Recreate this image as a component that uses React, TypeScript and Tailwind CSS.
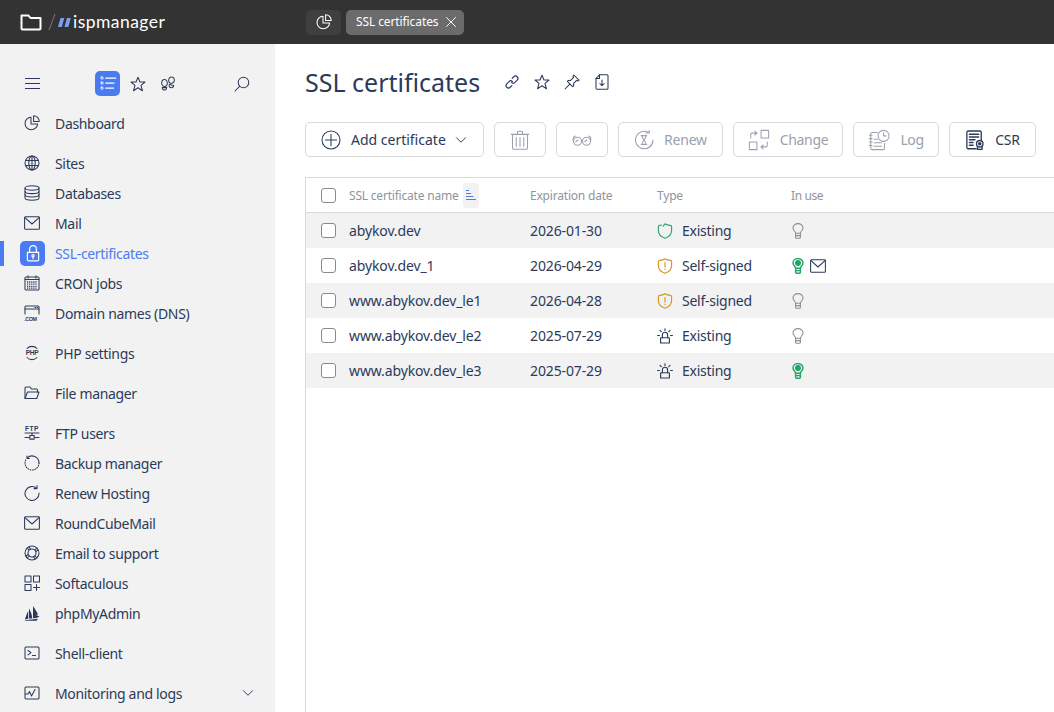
import React from "react";
import { ChevronDown, X } from "lucide-react";

type IconProps = { size?: number; className?: string; children?: React.ReactNode };

const Ic = ({ size = 16, className = "", children }: IconProps) => (
  <svg
    width={size}
    height={size}
    viewBox="0 0 16 16"
    fill="none"
    stroke="currentColor"
    strokeWidth="1.05"
    strokeLinecap="round"
    strokeLinejoin="round"
    className={`shrink-0 ${className}`}
  >
    {children}
  </svg>
);

// sidebar + header icons
const PieIcon = (p: IconProps) => (
  <Ic {...p}>
    <path d="M7 2.2A6.3 6.3 0 1 0 13.6 9H7Z" />
    <path d="M9.6 .8V6.4H15.2A5.6 5.6 0 0 0 9.6 .8Z" />
  </Ic>
);
const GlobeIcon = () => (
  <Ic>
    <circle cx="8" cy="8" r="7" />
    <ellipse cx="8" cy="8" rx="3.2" ry="7" />
    <path d="M8 1V15M1.5 5.5H14.5M1.5 10.5H14.5" />
  </Ic>
);
const DbIcon = () => (
  <Ic>
    <ellipse cx="8" cy="3" rx="7" ry="2.2" />
    <path d="M1 3V13C1 14.2 4 15.2 8 15.2S15 14.2 15 13V3" />
    <path d="M1 6.4C1 7.6 4 8.6 8 8.6S15 7.6 15 6.4M1 9.8C1 11 4 12 8 12S15 11 15 9.8" />
  </Ic>
);
const MailIcon = () => (
  <Ic>
    <rect x=".6" y="1.8" width="14.8" height="12.4" rx=".8" />
    <path d="M1 2.6L8 9L15 2.6" />
  </Ic>
);
const LockIcon = () => (
  <Ic size={18} className="text-white">
    <path d="M3 7.5H13V14A1 1 0 0 1 12 15H4A1 1 0 0 1 3 14Z" />
    <path d="M5 7.5V4.5A3 3 0 0 1 11 4.5V7.5" />
    <circle cx="8" cy="10.5" r="1" />
    <path d="M8 11.5V13" />
  </Ic>
);
const CalIcon = () => (
  <Ic>
    <rect x="1" y="2" width="14" height="13" rx="1" />
    <path d="M4 .8V3M12 .8V3M1 4.5H15" />
    <path
      d="M3 7H13M3 9.2H13M3 11.4H13M3 13.2H13"
      strokeDasharray="1.2 .9"
      strokeLinecap="butt"
      strokeWidth="1.3"
    />
  </Ic>
);
const DnsIcon = () => (
  <Ic>
    <path d="M1 9V2A1 1 0 0 1 2 1H14A1 1 0 0 1 15 2V9" />
    <path d="M1 4H15M11 2.5H11.6M13 2.5H13.6" />
    <text x="0" y="15.5" fontSize="5.4" fontWeight="700" fill="currentColor" stroke="none" fontFamily="Liberation Sans, sans-serif">
      .COM
    </text>
  </Ic>
);
const PhpIcon = () => (
  <Ic>
    <path d="M3 3.5A7 7 0 0 1 13 3.5M3 12.5A7 7 0 0 0 13 12.5" />
    <text x="8" y="10.4" textAnchor="middle" fontSize="6.6" fontWeight="700" fill="currentColor" stroke="none" fontFamily="Liberation Sans, sans-serif">
      PHP
    </text>
  </Ic>
);
const FolderOpenIcon = () => (
  <Ic>
    <path d="M1 13.5V3A1 1 0 0 1 2 2H6L7.5 4H12.5A1 1 0 0 1 13.5 5V7" />
    <path d="M1 13.5L3.5 7H15L12.8 13.5Z" />
  </Ic>
);
const FtpIcon = () => (
  <Ic>
    <text x="8" y="6" textAnchor="middle" fontSize="6.6" fontWeight="700" letterSpacing=".5" fill="currentColor" stroke="none" fontFamily="Liberation Sans, sans-serif">
      FTP
    </text>
    <path d="M1 8H15M8 8V10.5M1 12.5H5.5M10.5 12.5H15" />
    <rect x="5.8" y="10.5" width="4.4" height="3.6" />
  </Ic>
);
const BackupIcon = () => (
  <Ic>
    <path d="M3.2 2.9A7 7 0 0 1 15 8" />
    <path d="M3 1V3.4H5.4" />
    <path d="M15 8A7 7 0 1 1 1 8 7 7 0 0 1 2 4.4" strokeDasharray=".9 1.5" />
  </Ic>
);
const RenewIcon = () => (
  <Ic>
    <path d="M12.6 3.2A7 7 0 1 0 15 8" />
    <path d="M13 .6V3.6H10" />
  </Ic>
);
const BuoyIcon = () => (
  <Ic>
    <circle cx="8" cy="8" r="7" />
    <circle cx="8" cy="8" r="4" />
    <path d="M3 3L5.2 5.2M13 3L10.8 5.2M3 13L5.2 10.8M13 13L10.8 10.8M5 2L6.6 4.2M11 14L9.4 11.8M2 11L4.2 9.4M14 5L11.8 6.6" />
  </Ic>
);
const AppsIcon = () => (
  <Ic>
    <rect x="1" y="1" width="6" height="6" />
    <rect x="9.5" y="1" width="6" height="6" />
    <rect x="1" y="9.5" width="6" height="6" />
    <path d="M12.5 9.5V15.5M9.5 12.5H15.5" />
  </Ic>
);
const BoatIcon = () => (
  <Ic>
    <path
      d="M.8 14.5L3.2 8L4.2 6V13.8ZM5 13.6V3.5C6.5 6 8 9 8.2 13.4ZM9 13.3V1C11 4 13 7 14 9.5L12 10L15.5 11.5L12.3 13ZM.5 15.3L14 13.8L12.5 15.8H2Z"
      fill="currentColor"
      stroke="none"
    />
  </Ic>
);
const ShellIcon = () => (
  <Ic>
    <rect x="1" y="2" width="14" height="12" rx="1" />
    <path d="M4 5.5L7 7.7L4 9.9M8.5 10.5H11.5" />
  </Ic>
);
const MonitorIcon = () => (
  <Ic>
    <rect x="1" y="2" width="14" height="12" rx="1" />
    <path d="M1.5 9H4L5.5 6.5L7.5 11L11 4.5" />
  </Ic>
);
const StarIcon = () => (
  <Ic>
    <path d="M8 1.2L10 6H15L11 9.4L12.5 14.8L8 11.8L3.5 14.8L5 9.4L1 6H6Z" />
  </Ic>
);
const StepsIcon = () => (
  <Ic>
    <ellipse cx="4.5" cy="7" rx="2.8" ry="3.5" />
    <path d="M2.3 12.5A2.2 2.2 0 0 0 6.5 12.5" />
    <path d="M2.2 11.6H6.8" />
    <ellipse cx="11.5" cy="4.2" rx="2.8" ry="3.2" />
    <path d="M9.2 9.5A2.2 2.2 0 0 0 13.6 9.5L9.2 8.4" />
  </Ic>
);
const SearchIcon = () => (
  <Ic>
    <circle cx="9.5" cy="6.5" r="5.3" />
    <path d="M5.6 10.4L1 15" />
  </Ic>
);
const ListIcon = () => (
  <Ic size={18} className="text-white">
    <rect x="1.8" y="1.8" width="1.8" height="1.8" rx=".3" strokeWidth=".8" />
    <rect x="1.8" y="6.3" width="1.8" height="1.8" rx=".3" strokeWidth=".8" />
    <rect x="1.8" y="10.8" width="1.8" height="1.8" rx=".3" strokeWidth=".8" />
    <path d="M6 2.7H15M6 7.2H13.5M6 11.7H13" />
  </Ic>
);

// title icons
const LinkIcon = () => (
  <Ic>
    <g transform="rotate(-45 8 8)">
      <path d="M8.6 8A2.4 2.4 0 0 0 6.2 5.6H3A2.4 2.4 0 0 0 3 10.4H5.4" strokeWidth="1.15" />
      <path d="M7.4 8A2.4 2.4 0 0 0 9.8 10.4H13A2.4 2.4 0 0 0 13 5.6H10.6" strokeWidth="1.15" />
    </g>
  </Ic>
);
const PinIcon = () => (
  <Ic>
    <path d="M9.8 1L15 6.2L13.8 7L12.6 6.4L9.6 9.4L9.6 12L8.6 12.6L3.4 7.4L4 6.4H6.6L9.6 3.4L9 2.2Z" />
    <path d="M5.8 10.2L1 15" />
  </Ic>
);
const FileDownIcon = () => (
  <Ic>
    <path d="M5.5 .8H13A1 1 0 0 1 14 1.8V14.2A1 1 0 0 1 13 15.2H3A1 1 0 0 1 2 14.2V4.5Z" />
    <path d="M5.5 .8V4.5H2M8 6V11.5M5.8 9.5L8 11.7L10.2 9.5" />
  </Ic>
);

// toolbar icons
const PlusCircleIcon = () => (
  <Ic size={20}>
    <circle cx="8" cy="8" r="7.2" strokeWidth=".85" />
    <path d="M8 3.5V12.5M3.5 8H12.5" strokeWidth=".85" />
  </Ic>
);
const TrashIcon = () => (
  <Ic size={20}>
    <path d="M1 3.5H15M6 3.2V1.6A.6.6 0 0 1 6.6 1H9.4A.6.6 0 0 1 10 1.6V3.2" strokeWidth=".85" />
    <path d="M2 3.5V14.4A1 1 0 0 0 3 15.4H13A1 1 0 0 0 14 14.4V3.5" strokeWidth=".85" />
    <path d="M5 6V13M8 6V13M11 6V13" strokeWidth=".85" />
  </Ic>
);
const GlassesIcon = () => (
  <Ic size={20}>
    <circle cx="4.4" cy="9" r="3.2" strokeWidth=".85" />
    <circle cx="11.6" cy="9" r="3.2" strokeWidth=".85" />
    <path
      d="M7.6 8.5H8.4M1.2 9C.6 7 1 5.4 2.6 4.8M14.8 9C15.4 7 15 5.4 13.4 4.8M3 9.4L4.6 8M10.2 9.4L11.8 8"
      strokeWidth=".85"
    />
  </Ic>
);
const HourglassRenewIcon = () => (
  <Ic size={20}>
    <path d="M11.8 2A7 7 0 1 0 15.2 8" strokeWidth=".85" />
    <path d="M9.4 2.6H12.2V.2" strokeWidth=".85" transform="translate(0 -.2)" />
    <path d="M5.8 4.5H10.2M5.8 11.5H10.2M6.4 4.5C6.4 7 9.6 9 9.6 11.5M9.6 4.5C9.6 7 6.4 9 6.4 11.5" strokeWidth=".85" />
  </Ic>
);
const SwapIcon = () => (
  <Ic size={22}>
    <rect x="9.5" y="1" width="5.5" height="5.5" strokeWidth=".75" />
    <rect x="1" y="9.5" width="5.5" height="5.5" strokeWidth=".75" />
    <path d="M2 6.5V4A1 1 0 0 1 3 3H6.5M5 1.5L6.6 3L5 4.5" strokeWidth=".75" />
    <path d="M14 9.5V12A1 1 0 0 1 13 13H9.5M11 11.5L9.4 13L11 14.5" strokeWidth=".75" />
  </Ic>
);
const LogIcon = () => (
  <Ic size={22}>
    <path d="M7 2.5H3A1 1 0 0 0 2 3.5V14A1 1 0 0 0 3 15H11A1 1 0 0 0 12 14V10.5" strokeWidth=".75" />
    <path d="M1 4.5H3M1 7H3M1 9.5H3M1 12H3M4.5 7.5H7M4.5 10H10M4.5 12.5H10" strokeWidth=".75" />
    <circle cx="11.3" cy="5" r="4" strokeWidth=".75" />
    <path d="M11.3 2.8V5H13" strokeWidth=".75" />
  </Ic>
);
const CsrIcon = () => (
  <Ic size={20}>
    <path d="M9 15H2.5A1 1 0 0 1 1.5 14V1.8A1 1 0 0 1 2.5 .8H12A1 1 0 0 1 13 1.8V8" />
    <path d="M3.5 3.4H11M3.5 5.6H11M3.5 7.8H8M3.5 10H6.5M3.5 12.2H6.5" />
    <circle cx="11.8" cy="11" r="2.6" />
    <circle cx="11.8" cy="11" r=".9" fill="currentColor" />
    <path d="M10 13V15.6H13.6V13" />
  </Ic>
);

// table icons
const ShieldIcon = ({ className }: { className: string }) => (
  <Ic className={className}>
    <path d="M8 .8C9.6 2 10.8 2.4 13.2 2.4C14.2 2.4 14.6 3 14.6 4V7.6C14.6 11.2 11.8 14 8 15.2C4.2 14 1.4 11.2 1.4 7.6V4C1.4 3 1.8 2.4 2.8 2.4C5.2 2.4 6.4 2 8 .8Z" strokeWidth="1.15" />
    <path d="M8 4.5V9M8 11V11.4" strokeWidth="1.15" />
  </Ic>
);
const ShieldOkIcon = () => (
  <Ic className="text-[#2ba56f]">
    <path d="M4.4 2C3.8 2.3 3.3 2.4 2.8 2.4C1.8 2.4 1.4 3 1.4 4V7.6C1.4 11.2 4.2 14 8 15.2C11.8 14 14.6 11.2 14.6 7.6V4C14.6 3 14.2 2.4 13.2 2.4C10.8 2.4 9.6 2 8 .8L6.2 3.2" strokeWidth="1.15" />
  </Ic>
);
const AlarmIcon = () => (
  <Ic>
    <path d="M3.6 15V10.3A.6.6 0 0 1 4.2 9.7H11.8A.6.6 0 0 1 12.4 10.3V15Z" strokeWidth="1.15" />
    <path d="M5.4 9.7V6.8A2.6 2.6 0 0 1 10.6 6.8V9.7" strokeWidth="1.15" />
    <path d="M8 .8V2.4M3 2.4L4.2 3.6M13 2.4L11.8 3.6M.6 7.5H2.4M13.6 7.5H15.4" strokeWidth="1.15" />
  </Ic>
);
const BulbIcon = ({ on = false }: { on?: boolean }) => (
  <Ic className={on ? "text-[#1fa565]" : "text-[#8f8f8f]"}>
    <path d="M5.6 10.2C5.6 8.4 3 7.4 3 5A5 4.4 0 0 1 13 5C13 7.4 10.4 8.4 10.4 10.2Z" strokeWidth={on ? 1.4 : 1.1} />
    <path d="M5.6 10.2V14.2A1 1 0 0 0 6.6 15.2H9.4A1 1 0 0 0 10.4 14.2V10.2M5.6 12.6H10.4" strokeWidth={on ? 1.4 : 1.1} />
    {on && <circle cx="8" cy="5" r="2.4" fill="currentColor" />}
  </Ic>
);

type NavItem = { label: string; icon: React.ReactNode; active?: boolean; chevron?: boolean };

const navGroups: NavItem[][] = [
  [{ label: "Dashboard", icon: <PieIcon /> }],
  [
    { label: "Sites", icon: <GlobeIcon /> },
    { label: "Databases", icon: <DbIcon /> },
    { label: "Mail", icon: <MailIcon /> },
    { label: "SSL-certificates", icon: <LockIcon />, active: true },
    { label: "CRON jobs", icon: <CalIcon /> },
    { label: "Domain names (DNS)", icon: <DnsIcon /> },
  ],
  [{ label: "PHP settings", icon: <PhpIcon /> }],
  [{ label: "File manager", icon: <FolderOpenIcon /> }],
  [
    { label: "FTP users", icon: <FtpIcon /> },
    { label: "Backup manager", icon: <BackupIcon /> },
    { label: "Renew Hosting", icon: <RenewIcon /> },
    { label: "RoundCubeMail", icon: <MailIcon /> },
    { label: "Email to support", icon: <BuoyIcon /> },
    { label: "Softaculous", icon: <AppsIcon /> },
    { label: "phpMyAdmin", icon: <BoatIcon /> },
  ],
  [{ label: "Shell-client", icon: <ShellIcon /> }],
  [{ label: "Monitoring and logs", icon: <MonitorIcon />, chevron: true }],
];

const rows = [
  { name: "abykov.dev", date: "2026-01-30", type: "Existing", status: "ok", on: false, mail: false },
  { name: "abykov.dev_1", date: "2026-04-29", type: "Self-signed", status: "warn", on: true, mail: true },
  { name: "www.abykov.dev_le1", date: "2026-04-28", type: "Self-signed", status: "warn", on: false, mail: false },
  { name: "www.abykov.dev_le2", date: "2025-07-29", type: "Existing", status: "alarm", on: false, mail: false },
  { name: "www.abykov.dev_le3", date: "2025-07-29", type: "Existing", status: "alarm", on: true, mail: false },
];

const Checkbox = () => <span className="block size-[15px] rounded-[3px] border border-[#8a8a8a] bg-white" />;

const ToolButton = ({
  children,
  disabled = false,
  className = "",
}: {
  children: React.ReactNode;
  disabled?: boolean;
  className?: string;
}) => (
  <button
    className={`flex h-[35px] items-center justify-center rounded-[5px] border border-[#d9d9d9] bg-white text-[14px] ${
      disabled ? "text-[#9ba1ad]" : "text-[#2c3a5a]"
    } ${className}`}
  >
    {children}
  </button>
);

const App = () => {
  return (
    <div className="flex h-[712px] flex-col overflow-hidden bg-white font-['Noto_Sans',sans-serif] text-[14px] text-[#2c3a5a]">
      {/* header */}
      <div className="flex h-11 shrink-0 items-center bg-[#333333] pl-5">
        <svg width="22" height="18" viewBox="0 0 22 18" fill="none" stroke="white" strokeWidth="2" strokeLinejoin="round" className="shrink-0">
          <path d="M1.5 15.5V2.5H8.5L10.5 5H20.5V15.5A1 1 0 0 1 19.5 16.5H2.5A1 1 0 0 1 1.5 15.5Z" />
        </svg>
        <svg width="8" height="18" viewBox="0 0 8 18" className="ml-[6px] shrink-0" stroke="#777777" fill="none">
          <path d="M7 1L1 17" />
        </svg>
        <svg width="14" height="9" viewBox="0 0 14 9" fill="#7c9ff5" className="ml-[2px] shrink-0">
          <path d="M2.5 0H6.3L3.8 9H0ZM9 0H12.8L10.3 9H6.5Z" />
        </svg>
        <span className="ml-[1px] w-[93px] font-['Lato',sans-serif] text-[17.5px] font-normal tracking-[0.45px] text-white">ispmanager</span>
        <div className="ml-[140px] flex h-[25px] w-[35px] items-center justify-center rounded-[5px] bg-[#3f3f3f] text-white">
          <PieIcon />
        </div>
        <div className="ml-[5px] flex h-[25px] w-[118px] items-center rounded-[5px] bg-[#6b6b6b] pl-[10px] text-[12px] tracking-[-0.1px] text-white">
          <span>SSL certificates</span>
          <X size={18} strokeWidth={1.3} className="ml-auto mr-1" />
        </div>
      </div>

      <div className="flex min-h-0 flex-1">
        {/* sidebar */}
        <aside className="w-[275px] shrink-0 bg-[#f2f2f2] pt-[27px]">
          <div className="flex h-[25px] items-center pl-[25px] pr-[25px]">
            <svg width="15" height="13" viewBox="0 0 15 13" stroke="currentColor" fill="none" className="shrink-0">
              <path d="M0 1.5H15M0 6.5H15M0 11.5H15" />
            </svg>
            <div className="ml-[55px] flex size-[25px] items-center justify-center rounded-[5px] bg-[#4a7bf0]">
              <ListIcon />
            </div>
            <div className="ml-[10px]">
              <StarIcon />
            </div>
            <div className="ml-[14px]">
              <StepsIcon />
            </div>
            <div className="ml-auto">
              <SearchIcon />
            </div>
          </div>
          <nav className="mt-3 flex flex-col gap-[10px] tracking-[-0.33px]">
            {navGroups.map((group, i) => (
              <div key={i}>
                {group.map((item) => (
                  <div key={item.label} className="relative flex h-[30px] items-center pr-[18px]">
                    {item.active && <span className="absolute left-0 top-[2.5px] h-[25px] w-1 bg-[#4a7bf0]" />}
                    <div className={`flex w-[55px] shrink-0 items-center ${item.active ? "pl-5" : "pl-6"}`}>
                      {item.active ? (
                        <div className="flex size-[25px] items-center justify-center rounded-[5px] bg-[#4a7bf0]">{item.icon}</div>
                      ) : (
                        item.icon
                      )}
                    </div>
                    <span className={item.active ? "text-[#4a7bf0]" : ""}>{item.label}</span>
                    {item.chevron && <ChevronDown size={18} strokeWidth={1.3} className="ml-auto" />}
                  </div>
                ))}
              </div>
            ))}
          </nav>
        </aside>

        {/* content */}
        <main className="flex min-w-0 flex-1 flex-col pl-[30px]">
          <div className="mt-5 flex h-[36px] items-center">
            <h1 className="text-[25px] font-normal leading-none">SSL certificates</h1>
            <div className="ml-6 flex items-center gap-[14px]">
              <LinkIcon />
              <StarIcon />
              <PinIcon />
              <FileDownIcon />
            </div>
          </div>

          <div className="mt-[22px] flex gap-[10px]">
            <ToolButton className="w-[179px] justify-start gap-[10px] pl-[15px]">
              <PlusCircleIcon />
              <span>Add certificate</span>
              <ChevronDown size={18} strokeWidth={1.3} className="-ml-1" />
            </ToolButton>
            <ToolButton disabled className="w-[52px]">
              <TrashIcon />
            </ToolButton>
            <ToolButton disabled className="w-[52px]">
              <GlassesIcon />
            </ToolButton>
            <ToolButton disabled className="w-[105px] gap-[10px]">
              <HourglassRenewIcon />
              <span className="tracking-[-0.2px]">Renew</span>
            </ToolButton>
            <ToolButton disabled className="w-[110px] gap-[10px]">
              <SwapIcon />
              <span className="tracking-[-0.35px]">Change</span>
            </ToolButton>
            <ToolButton disabled className="w-[86px] gap-[10px]">
              <LogIcon />
              <span className="tracking-[-0.4px]">Log</span>
            </ToolButton>
            <ToolButton className="w-[87px] gap-[10px]">
              <CsrIcon />
              <span className="tracking-[-0.2px]">CSR</span>
            </ToolButton>
          </div>

          <section className="mt-5 flex-1 border-l border-t border-[#d9d9d9]">
            <div className="flex h-[35px] items-center border-b border-[#d9d9d9] text-[12px] tracking-[-0.2px] text-[#8f949e]">
              <div className="flex w-[43px] justify-center pl-[1px]">
                <Checkbox />
              </div>
              <div className="flex w-[181px] items-center">
                <span className="pt-[1px]">SSL certificate name</span>
                <span className="ml-[4px] flex h-[25px] w-4 items-center justify-center rounded-[4px] bg-[#f2f2f2]">
                  <svg width="10" height="11" viewBox="0 0 10 11" stroke="#4a7bf0" fill="none" className="shrink-0">
                    <path d="M0 .5H3M0 3.5H5M0 6.5H7.5M0 9.5H10" />
                  </svg>
                </span>
              </div>
              <div className="w-[127px] pt-[1px]">Expiration date</div>
              <div className="w-[134px] pt-[1px]">Type</div>
              <div className="pt-[1px] tracking-[-0.4px]">In use</div>
            </div>
            {rows.map((r, i) => (
              <div key={r.name} className={`flex h-[35px] items-center tracking-[-0.12px] ${i % 2 === 0 ? "bg-[#f2f2f2]" : "bg-white"}`}>
                <div className="flex w-[43px] justify-center pl-[1px]">
                  <Checkbox />
                </div>
                <div className="w-[181px]">{r.name}</div>
                <div className="w-[127px]">{r.date}</div>
                <div className="flex w-[134px] items-center gap-[9px] tracking-[-0.25px]">
                  {r.status === "ok" && <ShieldOkIcon />}
                  {r.status === "warn" && <ShieldIcon className="text-[#d9921f]" />}
                  {r.status === "alarm" && <AlarmIcon />}
                  <span>{r.type}</span>
                </div>
                <div className="-ml-[1.5px] flex items-center gap-1">
                  <BulbIcon on={r.on} />
                  {r.mail && <MailIcon />}
                </div>
              </div>
            ))}
          </section>
        </main>
      </div>
    </div>
  );
};

export default App;
